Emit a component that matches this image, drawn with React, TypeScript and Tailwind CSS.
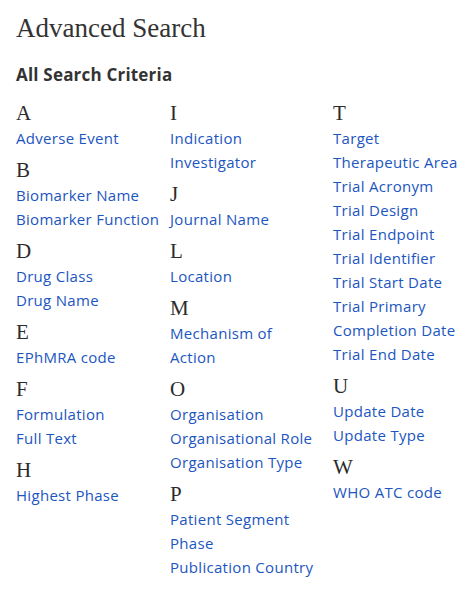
const columns: { letter: string; items: string[] }[][] = [
  [
    { letter: "A", items: ["Adverse Event"] },
    { letter: "B", items: ["Biomarker Name", "Biomarker Function"] },
    { letter: "D", items: ["Drug Class", "Drug Name"] },
    { letter: "E", items: ["EPhMRA code"] },
    { letter: "F", items: ["Formulation", "Full Text"] },
    { letter: "H", items: ["Highest Phase"] },
  ],
  [
    { letter: "I", items: ["Indication", "Investigator"] },
    { letter: "J", items: ["Journal Name"] },
    { letter: "L", items: ["Location"] },
    { letter: "M", items: ["Mechanism of Action"] },
    { letter: "O", items: ["Organisation", "Organisational Role", "Organisation Type"] },
    { letter: "P", items: ["Patient Segment", "Phase", "Publication Country"] },
  ],
  [
    {
      letter: "T",
      items: [
        "Target",
        "Therapeutic Area",
        "Trial Acronym",
        "Trial Design",
        "Trial Endpoint",
        "Trial Identifier",
        "Trial Start Date",
        "Trial Primary Completion Date",
        "Trial End Date",
      ],
    },
    { letter: "U", items: ["Update Date", "Update Type"] },
    { letter: "W", items: ["WHO ATC code"] },
  ],
];

const widths = [
  "w-[154px] shrink-0 pr-2",
  "w-[163px] shrink-0 pr-[13px]",
  "w-[130px] shrink-0",
];

export default function App() {
  return (
    <div className="w-[476px] h-[604px] bg-white px-4 pt-[11px] text-[#333]">
      <h1 className="font-['Liberation_Serif',serif] text-[27px] leading-[34px]">
        Advanced Search
      </h1>
      <h2 className="mt-[19px] font-['Open_Sans',sans-serif] font-bold text-[17px] leading-[22px] tracking-[0.2px]">
        All Search Criteria
      </h2>
      <div className="mt-[14px] flex">
        {columns.map((groups, ci) => (
          <div key={ci} className={widths[ci]}>
            {groups.map((g, gi) => (
              <div key={g.letter} className={gi === 0 ? "" : "mt-[7px]"}>
                <div className="font-['Liberation_Serif',serif] text-[21px] leading-[26px] text-[#2b2b2b]">
                  {g.letter}
                </div>
                {g.items.map((item) => (
                  <a
                    key={item}
                    href="#"
                    className="block font-['Open_Sans',sans-serif] text-[15px] leading-[24px] tracking-[0.3px] text-[#1c56c0]"
                  >
                    {item}
                  </a>
                ))}
              </div>
            ))}
          </div>
        ))}
      </div>
    </div>
  );
}
